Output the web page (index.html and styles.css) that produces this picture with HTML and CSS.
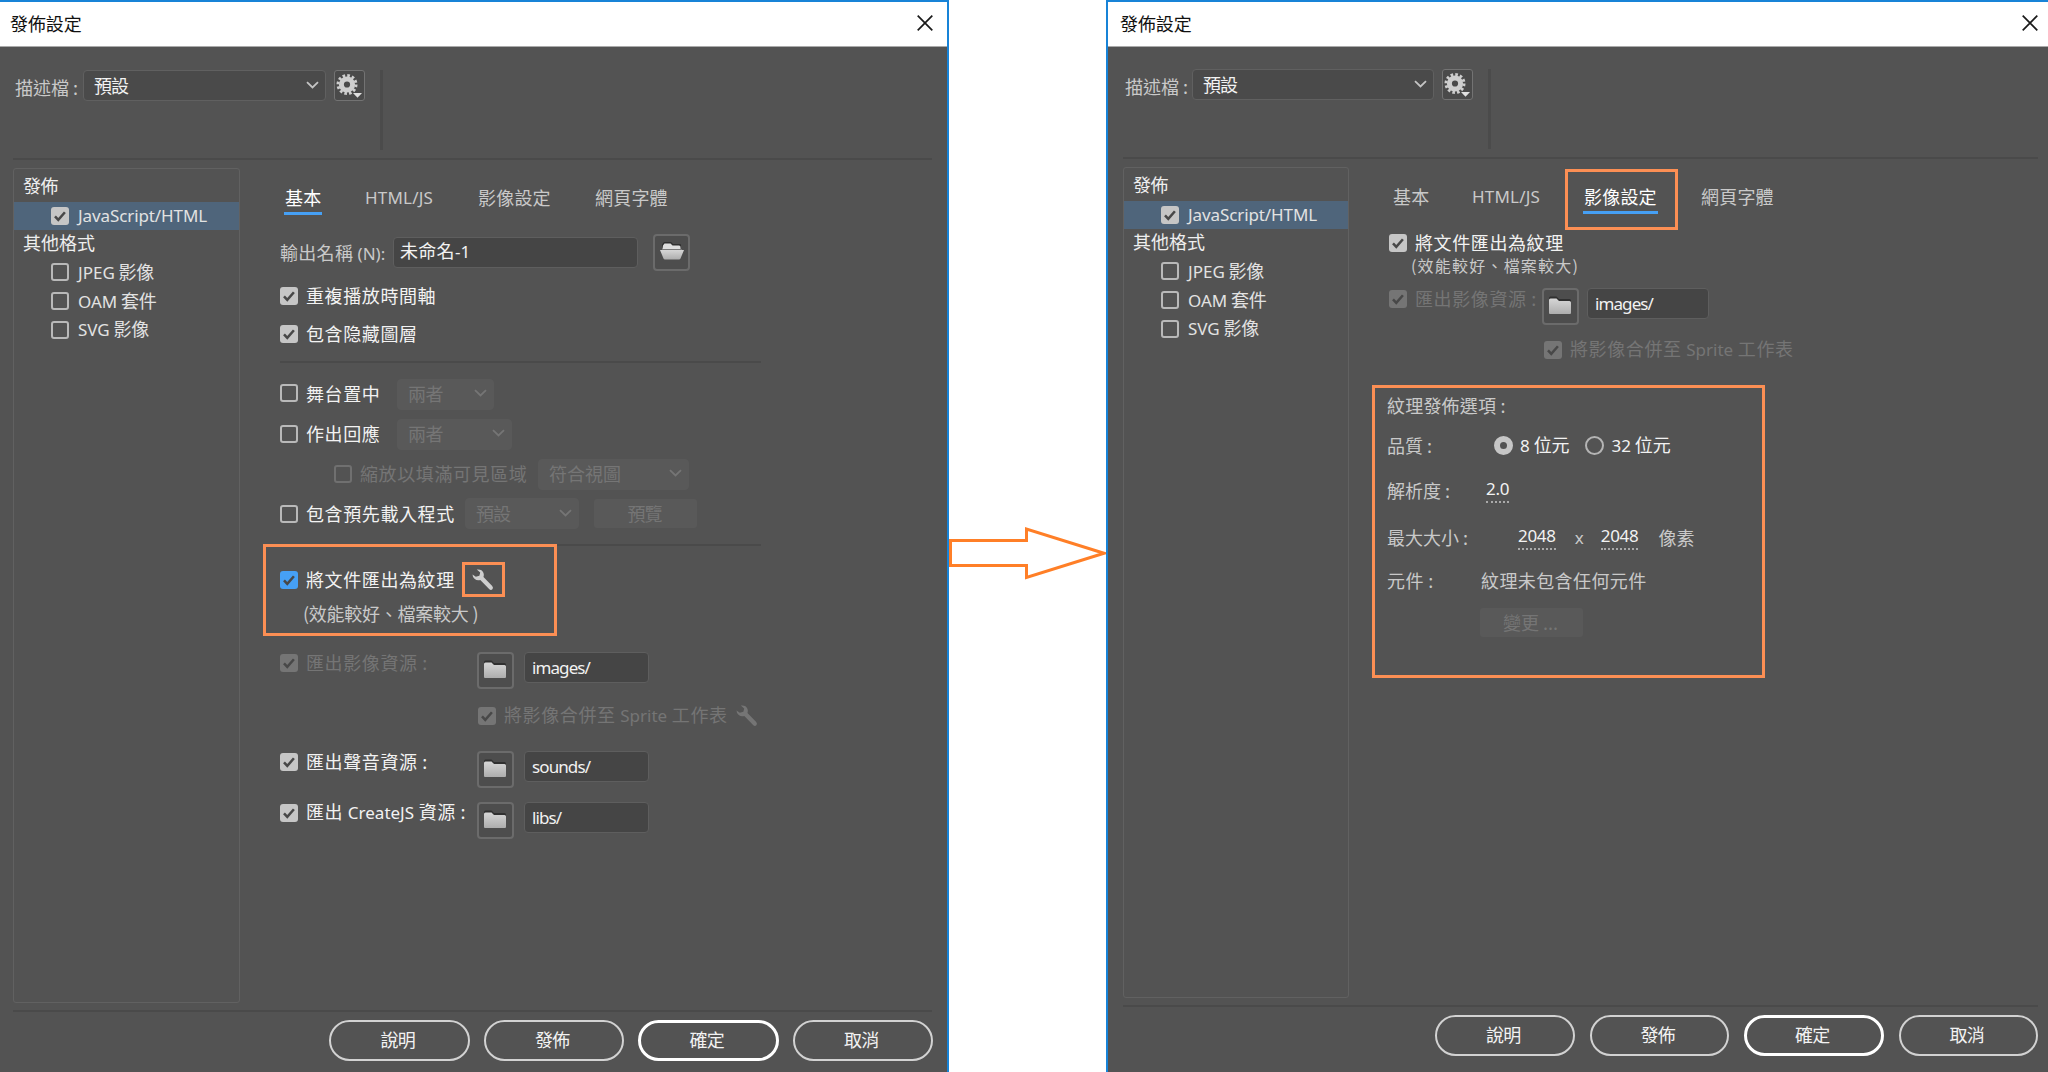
FILE: index.html
```html
<!DOCTYPE html>
<html lang="zh-TW">
<head>
    <meta charset="UTF-8">
    <title>發佈設定</title>
    <link rel="stylesheet" href="styles.css">
</head>
<body>
    <!-- 共用圖示 -->
    <svg class="sprite" width="0" height="0">
        <symbol id="close" viewBox="0 0 16 16"><path d="M.7.7l14.6 14.6M15.3.7L.7 15.3" fill="none" stroke="#1a1a1a" stroke-width="1.7"/></symbol>
        <symbol id="chevron" viewBox="0 0 13 8"><path d="M1 1.2l5.5 5.3L12 1.2" fill="none" stroke="currentColor" stroke-width="1.8"/></symbol>
        <symbol id="check" viewBox="0 0 18 18"><path d="M4 9.3l3.3 3.6 6.6-7.6" fill="none" stroke="currentColor" stroke-width="2.5"/></symbol>
        <symbol id="gear" viewBox="0 0 29 29">
            <circle cx="12" cy="13.5" r="5.6" fill="none" stroke="#cecece" stroke-width="5"/>
            <circle cx="12" cy="13.5" r="9" fill="none" stroke="#cecece" stroke-width="3" stroke-dasharray="2.6 2.112"/>
            <path d="M18 22h9l-4.5 4.8z" fill="#e0e0e0"/>
        </symbol>
        <symbol id="folder" viewBox="0 0 22 20">
            <path d="M0 2q0-1.5 1.5-1.5h6L10 3h10.500q1.500 0 1.500 1.500v2H0z" fill="#303030"/>
            <path d="M0 4q0-1.500 1.500-1.500h6l2.500 2.500h10.500q1.500 0 1.500 1.500v10.500q0 1-1 1H1q-1 0-1-1z" fill="url(#metal)"/>
        </symbol>
        <symbol id="folder-open" viewBox="0 0 24 18">
            <path d="M2 2.500L4 0h7l2 2h7q1 0 1 1v3H2z" fill="#303030"/>
            <path d="M3 3.500l1.500-2h6l2 2H19q1.500 0 1.500 1.500v2H2.500z" fill="#dedede"/>
            <path d="M2 7h20v1.500H2z" fill="#777"/>
            <path d="M0 8h24l-3.500 8.500q-.4 1-1.500 1H5q-1.100 0-1.500-1z" fill="url(#metal)"/>
        </symbol>
        <symbol id="wrench" viewBox="0 0 22 22">
            <path d="M4.800.6Q10 0 11.500 4q.8 2.300 0 4l8.700 9q1.500 2 .2 3.300-1.600 1.300-3.300-.3L8.300 11Q5 12 2.500 9.800.5 8 .5 5.500l3.300 2.300 3.600-1 .8-3.200z" fill="currentColor"/>
        </symbol>
        <linearGradient id="metal" x1="0" y1="0" x2="0" y2="1"><stop offset="0" stop-color="#d6d6d6"/><stop offset="1" stop-color="#adadad"/></linearGradient>
    </svg>

    <div class="stage">
        <!-- 基本 -->
        <section class="dialog dialog-left">
            <header class="titlebar">
                <span>發佈設定</span>
                <svg class="close"><use href="#close"/></svg>
            </header>
            <div class="profile">
                <span class="profile-label">描述檔 :</span>
                <div class="select profile-select"><span>預設</span><svg class="chevron"><use href="#chevron"/></svg></div>
                <button class="gear"><svg><use href="#gear"/></svg></button>
                <i class="divider"></i>
            </div>
            <hr class="wide">
            <div class="main">
                <nav class="sidebar">
                    <div class="side-title">發佈</div>
                    <div class="side-item selected"><i class="box on"><svg><use href="#check"/></svg></i><span class="en">JavaScript/HTML</span></div>
                    <div class="side-title spaced">其他格式</div>
                    <div class="side-item"><i class="box"></i><span><span class="en">JPEG</span> 影像</span></div>
                    <div class="side-item"><i class="box"></i><span><span class="en">OAM</span> 套件</span></div>
                    <div class="side-item"><i class="box"></i><span><span class="en">SVG</span> 影像</span></div>
                </nav>
                <div class="content">
                    <div class="tabs">
                        <span class="tab active">基本</span>
                        <span class="tab en">HTML/JS</span>
                        <span class="tab">影像設定</span>
                        <span class="tab">網頁字體</span>
                    </div>
                    <div class="row name-row">
                        <span class="name-label">輸出名稱 <span class="en">(N):</span></span>
                        <div class="input name-input">未命名<span class="en">-1</span></div>
                        <button class="icon-btn"><svg class="open-icon"><use href="#folder-open"/></svg></button>
                    </div>
                    <div class="row loop-row"><i class="box on"><svg><use href="#check"/></svg></i><span class="label">重複播放時間軸</span></div>
                    <div class="row hidden-row"><i class="box on"><svg><use href="#check"/></svg></i><span class="label">包含隐藏圖層</span></div>
                    <hr class="first-rule">
                    <div class="row stage-row"><i class="box"></i><span class="label stage-label">舞台置中</span>
                        <div class="select off both"><span>兩者</span><svg class="chevron"><use href="#chevron"/></svg></div>
                    </div>
                    <div class="row"><i class="box"></i><span class="label stage-label">作出回應</span>
                        <div class="select off both-wide"><span>兩者</span><svg class="chevron"><use href="#chevron"/></svg></div>
                    </div>
                    <div class="row scale-row"><i class="box off"></i><span class="label off-text scale-label">縮放以填滿可見區域</span>
                        <div class="select off fit"><span>符合視圖</span><svg class="chevron"><use href="#chevron"/></svg></div>
                    </div>
                    <div class="row preload-row"><i class="box"></i><span class="label preload-label">包含預先載入程式</span>
                        <div class="select off preload"><span class="tight">預設</span><svg class="chevron"><use href="#chevron"/></svg></div>
                        <button class="flat-btn"><span class="tight">預覽</span></button>
                    </div>
                    <hr class="second-rule">
                    <div class="mark texture-mark">
                        <div class="row texture-row"><i class="box on blue"><svg><use href="#check"/></svg></i><span class="label texture-label">將文件匯出為紋理</span>
                            <div class="mark wrench-mark"><svg class="wrench"><use href="#wrench"/></svg></div>
                        </div>
                        <div class="note">(效能較好<span class="comma">、</span>檔案較大 )</div>
                    </div>
                    <div class="asset image-asset">
                        <div class="asset-label"><i class="box on off"><svg><use href="#check"/></svg></i><span class="label off-text">匯出影像資源 :</span></div>
                        <button class="icon-btn"><svg class="folder-icon"><use href="#folder"/></svg></button>
                        <div class="input en">images/</div>
                    </div>
                    <div class="row sheet-row"><i class="box on off"><svg><use href="#check"/></svg></i><span class="label off-text">將影像合併至 <span class="en">Sprite</span> 工作表</span><svg class="wrench off-text"><use href="#wrench"/></svg></div>
                    <div class="asset">
                        <div class="asset-label"><i class="box on"><svg><use href="#check"/></svg></i><span class="label">匯出聲音資源 :</span></div>
                        <button class="icon-btn"><svg class="folder-icon"><use href="#folder"/></svg></button>
                        <div class="input en">sounds/</div>
                    </div>
                    <div class="asset libs-asset">
                        <div class="asset-label"><i class="box on"><svg><use href="#check"/></svg></i><span class="label">匯出 <span class="en">CreateJS</span> 資源 :</span></div>
                        <button class="icon-btn"><svg class="folder-icon"><use href="#folder"/></svg></button>
                        <div class="input en">libs/</div>
                    </div>
                </div>
            </div>
            <hr class="wide foot-rule">
            <footer class="buttons">
                <button class="pill">說明</button>
                <button class="pill">發佈</button>
                <button class="pill primary">確定</button>
                <button class="pill">取消</button>
            </footer>
        </section>

        <div class="between">
            <svg class="arrow" viewBox="0 0 157 56"><path d="M1.500 15.500h76V4L155 28.300 77.500 52.500v-12h-76z" fill="#fff" stroke="#ff7f27" stroke-width="3"/></svg>
        </div>

        <!-- 影像設定 -->
        <section class="dialog dialog-right">
            <header class="titlebar">
                <span>發佈設定</span>
                <svg class="close"><use href="#close"/></svg>
            </header>
            <div class="profile">
                <span class="profile-label">描述檔 :</span>
                <div class="select profile-select"><span>預設</span><svg class="chevron"><use href="#chevron"/></svg></div>
                <button class="gear"><svg><use href="#gear"/></svg></button>
                <i class="divider"></i>
            </div>
            <hr class="wide">
            <div class="main">
                <nav class="sidebar">
                    <div class="side-title">發佈</div>
                    <div class="side-item selected"><i class="box on"><svg><use href="#check"/></svg></i><span class="en">JavaScript/HTML</span></div>
                    <div class="side-title spaced">其他格式</div>
                    <div class="side-item"><i class="box"></i><span><span class="en">JPEG</span> 影像</span></div>
                    <div class="side-item"><i class="box"></i><span><span class="en">OAM</span> 套件</span></div>
                    <div class="side-item"><i class="box"></i><span><span class="en">SVG</span> 影像</span></div>
                </nav>
                <div class="content">
                    <div class="tabs">
                        <span class="tab">基本</span>
                        <span class="tab en">HTML/JS</span>
                        <span class="tab active marked">影像設定</span>
                        <span class="tab">網頁字體</span>
                    </div>
                    <div class="row texture-row"><i class="box on"><svg><use href="#check"/></svg></i><span class="label">將文件匯出為紋理</span></div>
                    <div class="note">(效能較好<span class="comma">、</span>檔案較大)</div>
                    <div class="asset image-asset">
                        <div class="asset-label"><i class="box on off"><svg><use href="#check"/></svg></i><span class="label off-text">匯出影像資源 :</span></div>
                        <button class="icon-btn"><svg class="folder-icon"><use href="#folder"/></svg></button>
                        <div class="input en">images/</div>
                    </div>
                    <div class="row sheet-row"><i class="box on off"><svg><use href="#check"/></svg></i><span class="label off-text">將影像合併至 <span class="en">Sprite</span> 工作表</span></div>
                    <div class="mark options">
                        <div class="opt heading">紋理發佈選項 :</div>
                        <div class="opt quality">
                            <span class="opt-label">品質 :</span>
                            <i class="radio on"></i><span class="radio-label"><span class="en">8</span> 位元</span>
                            <i class="radio"></i><span class="radio-label"><span class="en">32</span> 位元</span>
                        </div>
                        <div class="opt resolution">
                            <span class="opt-label">解析度 :</span><span class="num en">2.0</span>
                        </div>
                        <div class="opt size">
                            <span class="opt-label">最大大小 :</span><span class="num en">2048</span><span class="times en">x</span><span class="num en">2048</span><span class="unit">像素</span>
                        </div>
                        <div class="opt symbol">
                            <span class="opt-label">元件 :</span><span>紋理未包含任何元件</span>
                        </div>
                        <button class="flat-btn change">變更 ...</button>
                    </div>
                </div>
            </div>
            <hr class="wide foot-rule">
            <footer class="buttons">
                <button class="pill">說明</button>
                <button class="pill">發佈</button>
                <button class="pill primary">確定</button>
                <button class="pill">取消</button>
            </footer>
        </section>
    </div>
</body>
</html>
```

FILE: styles.css
```css
*,
*::after {
    box-sizing: border-box;
}

body {
    margin: 0;
    background: #fff;
    color: #c9c9c9;
    font: 18px/22px "Noto Sans CJK TC", "Noto Sans", sans-serif;
    white-space: nowrap;
    overflow: hidden;
}

button {
    padding: 0;
    color: inherit;
    font: inherit;
}

.sprite {
    display: block;
}

.en {
    font-family: "Noto Sans", sans-serif;
    font-size: 17px;
    letter-spacing: 0;
}

.comma {
    font-family: "Noto Sans CJK SC", sans-serif;
}

.stage {
    display: flex;
    height: 1072px;
}

.dialog {
    display: flex;
    flex-direction: column;
    border-top: 2px solid #1883d7;
    background: #535353;
}

.dialog-left {
    width: 949px;
    border-right: 2px solid #1883d7;
}

.dialog-right {
    width: 942px;
    border-left: 2px solid #1883d7;
}

.between {
    width: 157px;
    padding-top: 525px;
}

.arrow {
    display: block;
    width: 157px;
    height: 56px;
}

/* 標題列 */
.titlebar {
    display: flex;
    align-items: center;
    justify-content: space-between;
    height: 45px;
    padding: 0 14px 3px 10px;
    border-bottom: 1px solid #aaa;
    background: #fff;
    color: #111;
    letter-spacing: -.1px;
}

.dialog-right .titlebar {
    padding: 0 10px 3px 12px;
}

.close {
    width: 16px;
    height: 16px;
}

/* 描述檔 */
.profile {
    display: flex;
    height: 111px;
    padding: 23px 0 0 15px;
}

.dialog-right .profile {
    height: 110px;
    padding: 22px 0 0 17px;
}

.profile-label {
    width: 68px;
    padding-top: 6px;
}

.select {
    display: flex;
    align-items: center;
    justify-content: space-between;
    height: 31px;
    padding: 0 6px 2px 10px;
    border: 1px solid #606060;
    border-radius: 4px;
    background: #4a4a4a;
    color: #f2f2f2;
}

.profile-select {
    width: 243px;
    letter-spacing: -1px;
}

.dialog-right .profile-label {
    width: 67px;
}

.dialog-right .profile-select {
    width: 242px;
}

.chevron {
    width: 13px;
    height: 8px;
    color: #c4c4c4;
}

.gear {
    width: 31px;
    height: 31px;
    margin-left: 8px;
    border: 1px solid #737373;
    border-radius: 3px;
    background: #4a4a4a;
}

.gear svg {
    display: block;
    width: 29px;
    height: 29px;
}

.divider {
    width: 3px;
    height: 80px;
    margin-left: 15px;
    background: #4b4b4b;
}

hr {
    flex: none;
    height: 2px;
    margin: 0;
    border: 0;
    background: #4a4a4a;
}

.wide {
    margin: 0 15px 0 13px;
}

.dialog-right .wide {
    margin: 0 10px 0 15px;
}

/* 左側清單 */
.main {
    display: flex;
    height: 835px;
    margin: 8px 0 0 13px;
}

.dialog-right .main {
    height: 831px;
    margin-left: 15px;
}

.sidebar {
    width: 227px;
    padding-top: 4px;
    border: 1px solid #616161;
    border-radius: 3px;
}

.dialog-right .sidebar {
    width: 226px;
}

.side-title {
    height: 29px;
    padding: 1px 0 0 9px;
    color: #eee;
    letter-spacing: -.4px;
}

.spaced {
    height: 28px;
    letter-spacing: 0;
}

.side-item {
    display: flex;
    align-items: center;
    gap: 9px;
    height: 28.8px;
    padding-left: 37px;
    color: #e2e2e2;
    letter-spacing: -.3px;
}

.side-item > span {
    padding-bottom: 1px;
}

.side-item .en {
    letter-spacing: 0;
}

.side-item > .en {
    letter-spacing: -.1px;
}

.selected {
    height: 28px;
    background: #4f657b;
}

.box {
    flex: none;
    width: 18px;
    height: 18px;
    border: 2px solid #b9b9b9;
    border-radius: 3px;
}

.box svg {
    display: block;
    width: 18px;
    height: 18px;
    color: #484848;
}

.box.on {
    border: 0;
    background: #c6c6c6;
}

.box.blue {
    background: #46a0f5;
}

.box.off {
    border-color: #707070;
}

.box.on.off {
    background: #757575;
}

.off-text {
    color: #757575 !important;
}

/* 內容 */
.content {
    width: 490px;
    margin-left: 40px;
}

.tabs {
    display: grid;
    grid-template-columns: 80px 113px 117px auto;
    justify-items: start;
    height: 60px;
    padding: 16px 0 0 4px;
}

.dialog-right .tabs {
    grid-template-columns: 79px 112px 117px auto;
    padding-left: 3px;
}

.tab {
    height: 31px;
    padding: 0 1px;
    line-height: 26px;
    letter-spacing: .2px;
}

.tab.en {
    line-height: 28px;
}

.tab.active {
    border-bottom: 3px solid #46a0f5;
    color: #fff;
}

.marked {
    position: relative;
}

.marked::after {
    content: "";
    position: absolute;
    left: -18px;
    top: -14px;
    width: 113px;
    height: 61px;
    border: 3px solid #fc8f54;
}

.row {
    display: flex;
    align-items: center;
    height: 40px;
}

.label {
    margin-left: 8px;
    padding-bottom: 2px;
    color: #f2f2f2;
    letter-spacing: .6px;
}

.name-row {
    height: 48px;
}

.name-label {
    width: 113px;
    padding-top: 1px;
    letter-spacing: .3px;
}

.input {
    height: 31px;
    padding: 0 7px;
    border: 1px solid #5e5e5e;
    border-radius: 4px;
    background: #454545;
    color: #f2f2f2;
    line-height: 28px;
}

.name-input {
    width: 245px;
    margin-right: 15px;
    padding-left: 6px;
    line-height: 25px;
    letter-spacing: .3px;
}

.icon-btn {
    display: flex;
    align-items: center;
    justify-content: center;
    width: 37px;
    height: 37px;
    border: 2px solid #6b6b6b;
    border-radius: 4px;
    background: #4d4d4d;
}

.folder-icon {
    width: 22px;
    height: 20px;
    margin: 0 1px 2px 0;
}

.open-icon {
    width: 24px;
    height: 18px;
    margin-bottom: 2px;
}

.loop-row {
    height: 39px;
}

.hidden-row {
    height: 38px;
}

.first-rule {
    width: 481px;
    margin: 8px 0 11px;
}

.stage-row .box {
    margin-bottom: 2px;
}

.stage-label {
    width: 91px;
}

.select.off {
    border-color: #595959;
    background: #595959;
    color: #757575;
}

.select.off .chevron {
    color: #757575;
}

.both {
    width: 97px;
}

.both-wide {
    width: 115px;
}

.both span,
.both-wide span {
    letter-spacing: -.6px;
}

.scale-row {
    padding-left: 54px;
}

.scale-label {
    width: 178px;
}

.fit {
    width: 151px;
}

.preload-row {
    height: 39px;
}

.preload-label {
    width: 159px;
}

.preload {
    width: 114px;
    margin-right: 15px;
}

.tight {
    letter-spacing: -1px;
}

.flat-btn {
    width: 103px;
    height: 29px;
    padding: 0 2px 2px 0;
    border: 0;
    border-radius: 3px;
    background: #595959;
    color: #757575;
}

.second-rule {
    width: 481px;
    margin: 11px 0 -2px;
}

/* 橘色標示框 */
.mark {
    border: 3px solid #fc8f54;
}

.texture-mark {
    width: 294px;
    height: 92px;
    margin-left: -17px;
    padding: 15px 0 0 14px;
}

.texture-row {
    height: 35px;
}

.texture-label {
    width: 156px;
}

.wrench-mark {
    width: 43px;
    height: 35px;
    padding: 4px 0 0 7px;
}

.wrench {
    display: block;
    width: 22px;
    height: 22px;
    color: #cfcfcf;
}

.note {
    padding: 5px 0 0 23px;
    letter-spacing: -.25px;
}

.asset {
    display: flex;
    height: 37px;
}

.image-asset {
    margin-top: 16px;
}

.libs-asset {
    margin-top: 14px;
}

.asset-label {
    display: flex;
    align-items: center;
    width: 197px;
    height: 22px;
}

.asset .input {
    width: 125px;
    margin: 0 0 0 10px;
    line-height: 29px;
    letter-spacing: -.9px;
}

.sheet-row {
    height: 54px;
    margin-bottom: 8px;
    padding-left: 198px;
}

.sheet-row .wrench {
    margin-left: 8px;
}

/* 影像設定內容 */
.dialog-right .texture-row {
    height: 32px;
}

.dialog-right .note {
    height: 14px;
    padding: 0 0 0 22px;
    font-size: 16px;
    line-height: 12px;
    letter-spacing: 1.2px;
}

.dialog-right .image-asset {
    margin-top: 15px;
}

.dialog-right .asset-label {
    width: 153px;
}

.dialog-right .asset .input {
    width: 122px;
    margin-left: 8px;
}

.dialog-right .sheet-row {
    height: 50px;
    margin-bottom: 10px;
    padding-left: 155px;
}

.options {
    width: 393px;
    height: 293px;
    margin-left: -17px;
    padding-left: 12px;
}

.opt {
    display: flex;
    align-items: center;
    padding-bottom: 2px;
}

.heading {
    height: 35px;
    letter-spacing: .2px;
}

.quality {
    height: 46px;
}

.quality .opt-label {
    width: 107px;
}

.radio {
    width: 19px;
    height: 19px;
    border: 2px solid #b4b4b4;
    border-radius: 50%;
}

.radio.on {
    border: 6px solid #c6c6c6;
}

.radio-label {
    margin: 0 16px 0 7px;
    color: #f2f2f2;
    letter-spacing: -.1px;
}

.resolution {
    height: 44px;
}

.resolution .opt-label {
    width: 99px;
}

.num {
    height: 24px;
    margin-top: 2px;
    border-bottom: 2px dotted #aaa;
    color: #f2f2f2;
    line-height: 20px;
    letter-spacing: -.3px;
}

.size {
    height: 50px;
}

.size .opt-label {
    width: 131px;
}

.times {
    margin: 2px 17px 0 19px;
}

.unit {
    margin-left: 20px;
}

.symbol {
    height: 36px;
}

.symbol .opt-label {
    width: 94px;
}

.symbol span {
    letter-spacing: .4px;
}

.change {
    margin: 9px 0 0 93px;
}

/* 底部按鈕 */
.foot-rule.foot-rule {
    margin-top: 7px;
}

.buttons {
    display: flex;
    gap: 14px;
    justify-content: flex-end;
    padding: 8px 14px 0 0;
}

.dialog-right .buttons {
    gap: 15px;
    padding: 8px 10px 0 0;
}

.pill {
    width: 140.5px;
    height: 41px;
    padding: 0 3px 3px 0;
    border: 2px solid #d2d2d2;
    border-radius: 21px;
    background: #535353;
    color: #f2f2f2;
    letter-spacing: -.8px;
}

.dialog-right .pill {
    width: 139.5px;
}

.pill.primary {
    border: 3px solid #fff;
}
```
